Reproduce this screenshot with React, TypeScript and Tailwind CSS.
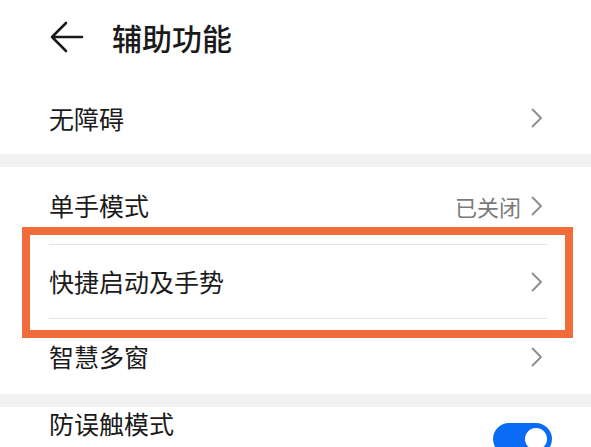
import React from "react";

const Chevron = () => (
  <svg width="12" height="20" viewBox="0 0 12 20" fill="none" className="shrink-0">
    <path d="M1.5 1.5 L10 10 L1.5 18.5" stroke="#8c8c8c" strokeWidth="1.8" strokeLinecap="round" strokeLinejoin="round" />
  </svg>
);

const Row = ({ label, value, h, divider }: { label: string; value?: string; h: string; divider?: boolean }) => (
  <div className={`flex flex-col ${h}`}>
    <div className="flex flex-1 items-center pl-[49px] pr-[48px]">
      <span className="flex-1 text-[25px] text-[#1b1b1b] leading-none">{label}</span>
      {value && <span className="mr-[10px] text-[22px] text-[#7a7a7a] leading-none">{value}</span>}
      <Chevron />
    </div>
    {divider && <div className="ml-[49px] mr-[43px] h-px bg-[#e6e6e6]" />}
  </div>
);

export default function App() {
  return (
    <div
      className="relative w-[591px] h-[447px] overflow-hidden bg-white"
      style={{ fontFamily: '"Noto Sans CJK SC", "Noto Sans", sans-serif' }}
    >
      <div className="flex h-[82px] items-center pl-[50px] pb-[8px]">
        <svg width="34" height="32" viewBox="0 0 34 32" fill="none">
          <path d="M16 2 L2 16 L16 30 M2 16 H32" stroke="#1a1a1a" strokeWidth="2.6" strokeLinecap="round" strokeLinejoin="round" />
        </svg>
        <span className="ml-[28px] text-[30px] font-medium text-[#1a1a1a] leading-none">辅助功能</span>
      </div>
      <Row label="无障碍" h="h-[72px]" />
      <div className="h-[13px] bg-[#f2f2f2]" />
      <Row label="单手模式" value="已关闭" h="h-[78px]" divider />
      <Row label="快捷启动及手势" h="h-[74px]" divider />
      <Row label="智慧多窗" h="h-[75px]" />
      <div className="h-[13px] bg-[#f2f2f2]" />
      <div className="flex items-start pl-[49px] pr-[39px] pt-[1px]">
        <div className="flex flex-1 flex-col">
          <span className="text-[25px] text-[#1b1b1b] leading-[30px]">防误触模式</span>
          <span className="mt-[8px] text-[19px] text-[#b0b0b0] leading-[24px]">防止手机在口袋或包里时误触屏幕</span>
        </div>
        <div className="mt-[15px] flex h-[32px] w-[59px] items-center justify-end rounded-full bg-[#0a6cf5] p-[2px]">
          <div className="h-[28px] w-[28px] rounded-full border-[3px] border-[#0a6cf5] bg-white" />
        </div>
      </div>
      <div className="absolute left-[22px] top-[227px] h-[111px] w-[551px] border-[8px] border-[#f26b3b]" />
    </div>
  );
}
